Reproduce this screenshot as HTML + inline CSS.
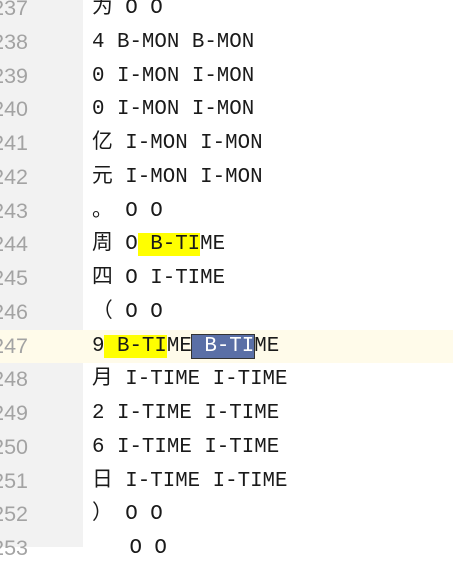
<!DOCTYPE html><html><head><style>
body{margin:0;width:453px;height:547px;overflow:hidden;background:#fff;font-family:"Liberation Mono","Noto Sans CJK SC",monospace;}
.g{position:absolute;left:0;top:0;width:83px;height:547px;background:#f2f2f2;}
.l{position:absolute;left:0;width:453px;height:33.75px;line-height:33.75px;font-size:20.8px;}
.n{position:absolute;right:425px;color:#a3a3a3;font-family:"Liberation Sans",sans-serif;font-size:21.5px;}
.t{position:absolute;left:92px;color:#1a1a1a;white-space:pre;}
.y{background:#ffff00;}
.b{background:#5a6fa6;color:#fff;outline:1px solid #333;}
</style></head><body>
<div class="g"></div>
<div id="c"></div>
<script>
var L=[["237","为 O O"],["238","4 B-MON B-MON"],["239","0 I-MON I-MON"],["240","0 I-MON I-MON"],["241","亿 I-MON I-MON"],["242","元 I-MON I-MON"],["243","。 O O"],["244",'周 O<span class="y"> B-TI</span>ME'],["245","四 O I-TIME"],["246","（ O O"],["247",'9<span class="y"> B-TI</span>ME<span class="b"> B-TI</span>ME'],["248","月 I-TIME I-TIME"],["249","2 I-TIME I-TIME"],["250","6 I-TIME I-TIME"],["251","日 I-TIME I-TIME"],["252","） O O"],["253","   O O"]];
var h="";L.forEach(function(r,i){var top=-8+33.75*i;var hl=r[0]=="247";
h+='<div class="l" style="top:'+top+'px">'+(hl?'<div style="position:absolute;left:0;top:0;width:453px;height:100%;background:#fffbea"></div>':'')+'<span class="n">'+r[0]+'</span><span class="t">'+r[1]+'</span></div>';});
document.getElementById("c").innerHTML=h;
</script>
</body></html>
